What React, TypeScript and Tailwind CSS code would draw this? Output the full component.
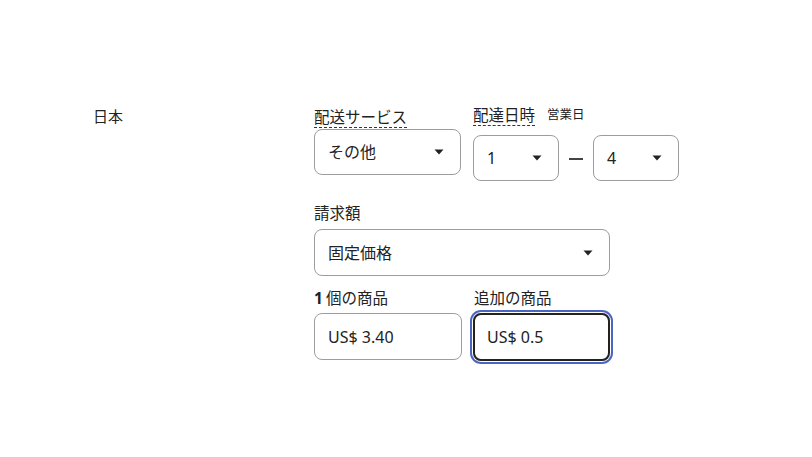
import React from 'react';

const font = { fontFamily: '"Noto Sans", "Noto Sans CJK JP", sans-serif' };

function Caret() {
  return (
    <svg width="10" height="6" viewBox="0 0 10 6" className="shrink-0">
      <path d="M0.5 0.6 H9.5 L5 5.6 Z" fill="#222" />
    </svg>
  );
}

function Select({ value, className }: { value: string; className: string }) {
  return (
    <div
      className={`flex items-center justify-between rounded-[8px] border border-[#9d9d9d] bg-white pl-[13px] pr-[16px] text-[16px] text-[#222] ${className}`}
    >
      <span>{value}</span>
      <Caret />
    </div>
  );
}

function DottedLabel({ children }: { children: React.ReactNode }) {
  return (
    <span className="inline-block border-b border-dashed border-[#333] text-[15.5px] leading-[20px] text-[#222]">
      {children}
    </span>
  );
}

export default function App() {
  return (
    <div className="min-h-[457px] w-[812px] bg-white text-[#222]" style={font}>
      <div className="flex pl-[93px] pt-[105px]">
        <div className="w-[221px] text-[15px] leading-[22px]">日本</div>

        <div className="flex flex-col">
          {/* shipping service + delivery time */}
          <div className="flex gap-[12px]">
            <div className="flex w-[147px] flex-col">
              <div className="h-[21px]">
                <DottedLabel>配送サービス</DottedLabel>
              </div>
              <Select value="その他" className="mt-[3px] h-[46px] w-[147px]" />
            </div>

            <div className="flex flex-col">
              <div className="flex h-[21px] items-start gap-[12px]">
                <DottedLabel>配達日時</DottedLabel>
                <span className="mt-[1px] text-[12.5px] leading-[18px]">営業日</span>
              </div>
              <div className="mt-[9px] flex items-center">
                <Select value="1" className="h-[46px] w-[86px]" />
                <span className="mx-[10px] mt-[2px] h-[1.5px] w-[14px] bg-[#444]" />
                <Select value="4" className="h-[46px] w-[86px]" />
              </div>
            </div>
          </div>

          {/* billing */}
          <div className="mt-[22px] text-[15.5px] leading-[20px]">請求額</div>
          <Select value="固定価格" className="mt-[6px] h-[47px] w-[296px]" />

          {/* prices */}
          <div className="mt-[12px] flex gap-[11px]">
            <div className="flex w-[148px] flex-col">
              <div className="text-[15.5px] leading-[20px]">
                <span className="mr-[3px] font-bold">1</span>個の商品
              </div>
              <div className="mt-[5px] flex h-[47px] items-center rounded-[8px] border border-[#9d9d9d] pl-[13px] text-[16px]">
                US$ 3.40
              </div>
            </div>
            <div className="flex flex-col">
              <div className="pl-[1px] text-[15.5px] leading-[20px]">追加の商品</div>
              <div className="mt-[5px] flex h-[48px] w-[137px] items-center rounded-[8px] border-2 border-[#222] pl-[12px] text-[16px] ring-2 ring-[#4a66c0] ring-offset-1">
                US$ 0.5
              </div>
            </div>
          </div>
        </div>
      </div>
    </div>
  );
}
